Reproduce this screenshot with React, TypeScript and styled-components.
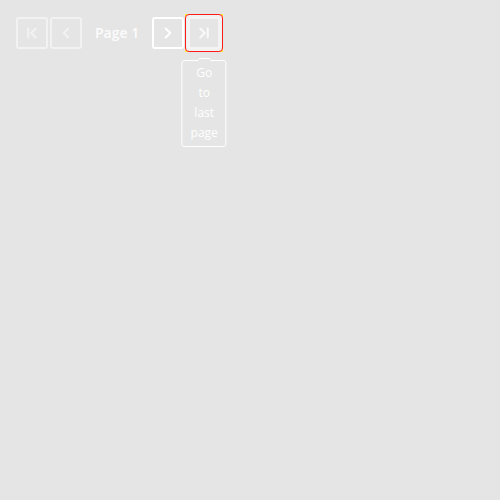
import React from "react";
import styled, { createGlobalStyle } from "styled-components";
import { ChevronFirst, ChevronLeft, ChevronRight, ChevronLast } from "lucide-react";

const GlobalStyle = createGlobalStyle`
  html, body {
    margin: 0;
    padding: 0;
    background: #e5e5e5;
    font-family: "Open Sans", "Liberation Sans", sans-serif;
  }
  #root {
    min-height: 500px;
  }
`;

const Pager = styled.nav`
  display: flex;
  align-items: center;
  gap: 2px;
  padding: 17px 16px;
`;

const PageButton = styled.button<{ $disabled?: boolean }>`
  position: relative;
  z-index: 1;
  display: flex;
  align-items: center;
  justify-content: center;
  width: 32px;
  height: 32px;
  padding: 0;
  box-sizing: border-box;
  background: #e5e5e5;
  border: 2px solid ${(p) => (p.$disabled ? "#f2f2f2" : "#ffffff")};
  border-radius: 3px;
  color: ${(p) => (p.$disabled ? "#f2f2f2" : "#ffffff")};
  cursor: ${(p) => (p.$disabled ? "default" : "pointer")};
`;

const ActiveButton = styled(PageButton)`
  border-color: #f3f3f3;
  color: #fafafa;
`;

const PageLabel = styled.span`
  margin: 0 11px 0 11px;
  font-size: 14px;
  font-weight: 600;
  color: #fcfcfc;
  line-height: 32px;
`;

const LastSlot = styled.div`
  position: relative;
  margin-left: 2px;
  width: 32px;
  height: 32px;
`;

const FocusFrame = styled.span`
  position: absolute;
  inset: -3px;
  background: #ffef3a;
`;

const FocusRing = styled.span`
  display: block;
  width: 100%;
  height: 100%;
  box-sizing: border-box;
  border: 1px solid #ff1a1a;
  border-radius: 4px;
  background: #f2f2f2;
`;

const Tooltip = styled.div`
  position: absolute;
  top: 43px;
  left: 50%;
  transform: translateX(-50%);
  width: min-content;
  box-sizing: border-box;
  padding: 2px 8px 3px;
  border: 1px solid #ffffff;
  border-radius: 3px;
  font-size: 12px;
  font-weight: 400;
  line-height: 20px;
  color: #ffffff;
  text-align: center;
  z-index: 2;
`;

const TooltipArrow = styled.svg`
  position: absolute;
  top: -4px;
  left: 50%;
  margin-left: -8px;
  display: block;
`;

const ICON = 18;
const STROKE = 2.67;

export default function App() {
  return (
    <>
      <GlobalStyle />
      <Pager>
        <PageButton $disabled aria-label="Go to first page">
          <ChevronFirst size={ICON} strokeWidth={STROKE} />
        </PageButton>
        <PageButton $disabled aria-label="Go to previous page">
          <ChevronLeft size={ICON} strokeWidth={STROKE} />
        </PageButton>
        <PageLabel>Page 1</PageLabel>
        <PageButton aria-label="Go to next page">
          <ChevronRight size={ICON} strokeWidth={STROKE} />
        </PageButton>
        <LastSlot>
          <FocusFrame>
            <FocusRing />
          </FocusFrame>
          <ActiveButton aria-label="Go to last page">
            <ChevronLast size={ICON} strokeWidth={STROKE} />
          </ActiveButton>
          <Tooltip role="tooltip">
            <TooltipArrow width="16" height="5" viewBox="0 0 16 5">
              <path d="M0 5 L3 1.5 H13 L16 5 Z" fill="#e5e5e5" />
              <path d="M0.5 4.5 L3 1.5 H13 L15.5 4.5" fill="none" stroke="#ffffff" strokeWidth="1" />
            </TooltipArrow>
            Go to last page
          </Tooltip>
        </LastSlot>
      </Pager>
    </>
  );
}
